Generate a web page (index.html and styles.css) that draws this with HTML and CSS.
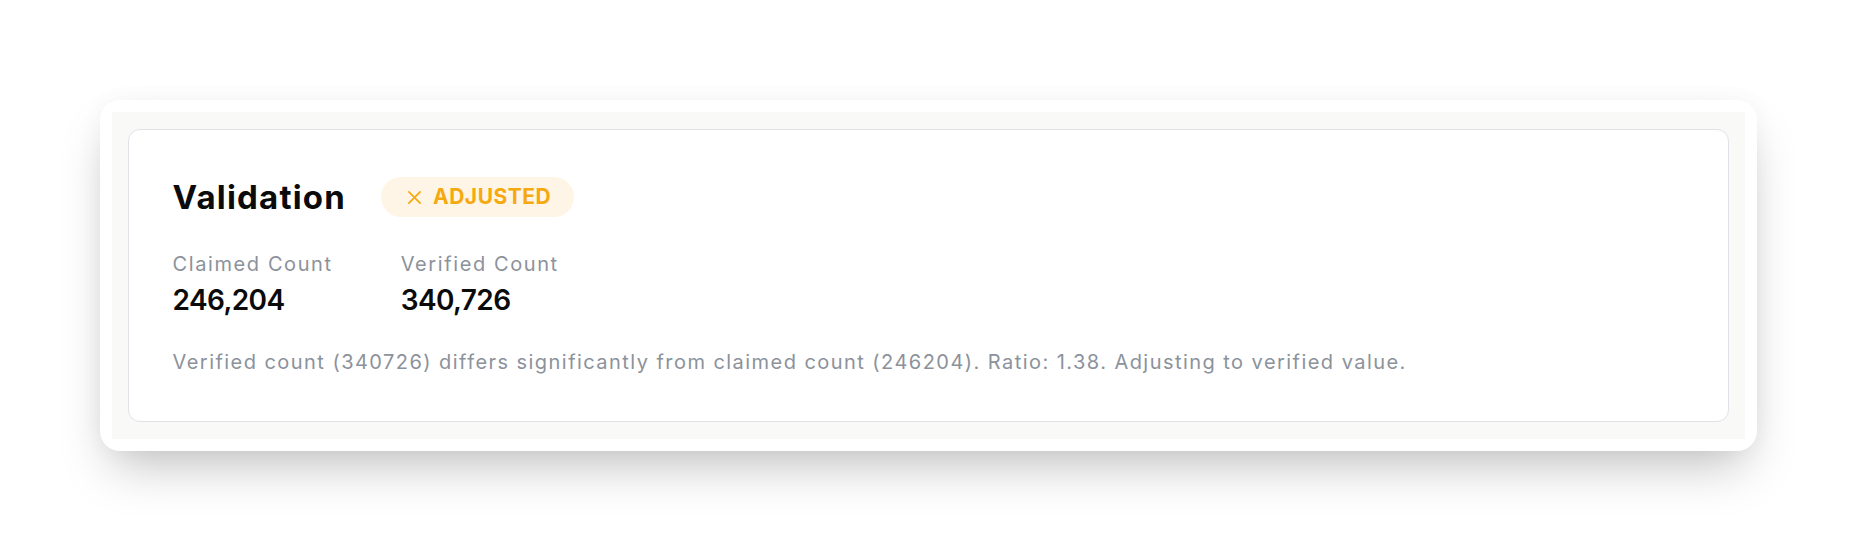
FILE: index.html
```html
<!DOCTYPE html>
<html lang="en">
<head>
<meta charset="utf-8">
<title>Validation</title>
<link rel="stylesheet" href="styles.css">
</head>
<body>
  <div class="frame">
    <div class="canvas">
      <section class="card">
        <header class="card-head">
          <h2 class="title">Validation</h2>
          <span class="badge">
            <svg class="badge-icon" viewBox="0 0 16 16" width="15" height="15" aria-hidden="true">
              <path d="M2 2 14 14 M14 2 2 14" fill="none" stroke="currentColor" stroke-width="1.8" stroke-linecap="round"/>
            </svg>
            <span class="badge-text">ADJUSTED</span>
          </span>
        </header>
        <div class="stats">
          <div class="stat">
            <div class="stat-label">Claimed Count</div>
            <div class="stat-value">246,204</div>
          </div>
          <div class="stat">
            <div class="stat-label">Verified Count</div>
            <div class="stat-value">340,726</div>
          </div>
        </div>
        <p class="note">Verified count (340726) differs significantly from claimed count (246204). Ratio: 1.38. Adjusting to verified value.</p>
      </section>
    </div>
  </div>
</body>
</html>
```
FILE: styles.css
```css
html, body {
  margin: 0;
  padding: 0;
  background: #ffffff;
}

body {
  font-family: Inter, "Noto Sans", "Liberation Sans", sans-serif;
  padding: 100px 0 0;
  height: 550px;
  box-sizing: border-box;
}

.frame {
  width: 1657px;
  margin: 0 auto;
  background: #ffffff;
  border-radius: 20px;
  padding: 12px;
  box-sizing: border-box;
  box-shadow: 0 25px 50px -12px rgba(0, 0, 0, 0.25), 0 0 24px rgba(0, 0, 0, 0.035);
}

.canvas {
  background: #f9f9f8;
  padding: 17px 16px;
}

.card {
  background: #ffffff;
  border: 1px solid #dfe3e8;
  border-radius: 12px;
  padding: 47px 44px 45px;
}

.card-head {
  display: flex;
  align-items: center;
  gap: 35px;
  height: 40px;
}

.title {
  margin: 0;
  font-size: 33px;
  line-height: 40px;
  font-weight: 700;
  color: #0b0b0b;
  letter-spacing: 1.2px;
}

.badge {
  display: inline-flex;
  align-items: center;
  gap: 11px;
  height: 40px;
  padding: 0 23px 0 26px;
  border-radius: 20px;
  background: #fff5e6;
  color: #f5a90f;
}

.badge-icon {
  display: block;
}

.badge-text {
  font-size: 21px;
  line-height: 28px;
  font-weight: 700;
  letter-spacing: 0.5px;
}

.stats {
  display: flex;
  gap: 68px;
  margin-top: 33px;
}

.stat-label {
  font-size: 20px;
  line-height: 28px;
  color: #8b929b;
  letter-spacing: 1.6px;
}

.stat-value {
  margin-top: 5px;
  font-size: 28px;
  line-height: 34px;
  font-weight: 600;
  color: #0b0b0b;
  letter-spacing: -0.6px;
}

.note {
  margin: 31px 0 0;
  font-size: 20px;
  line-height: 28px;
  color: #8b929b;
  letter-spacing: 1.45px;
}
```
